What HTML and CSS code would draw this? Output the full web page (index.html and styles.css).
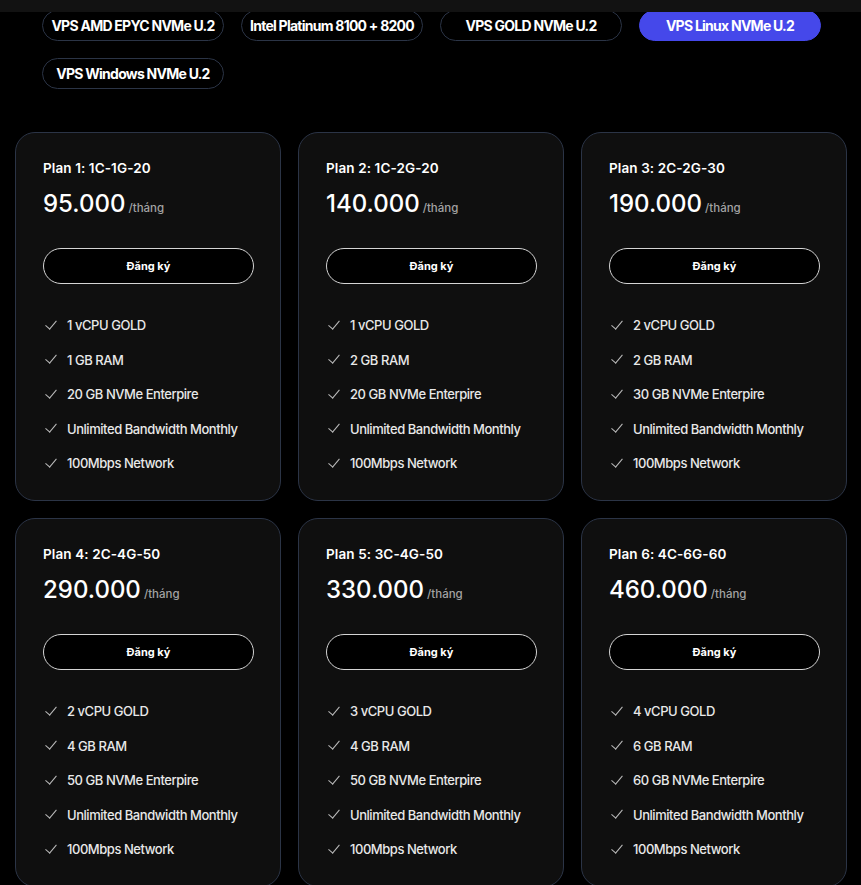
FILE: index.html
```html
<!DOCTYPE html>
<html lang="vi">
<head>
    <meta charset="UTF-8">
    <meta name="viewport" content="width=device-width, initial-scale=1.0">
    <title>Bảng giá VPS</title>
    <link rel="stylesheet" href="styles.css">
</head>
<body>
    <div class="topbar"></div>

    <div class="tabs">
        <button class="tab">VPS AMD EPYC NVMe U.2</button>
        <button class="tab">Intel Platinum 8100 + 8200</button>
        <button class="tab">VPS GOLD NVMe U.2</button>
        <button class="tab active">VPS Linux NVMe U.2</button>
        <button class="tab">VPS Windows NVMe U.2</button>
    </div>

    <div class="plans">
        <div class="plan">
            <h3>Plan 1: 1C-1G-20</h3>
            <div class="price">95.000<span>/tháng</span></div>
            <a href="#" class="order">Đăng ký</a>
            <ul class="features">
                <li>1 vCPU GOLD</li>
                <li>1 GB RAM</li>
                <li>20 GB NVMe Enterpire</li>
                <li>Unlimited Bandwidth Monthly</li>
                <li>100Mbps Network</li>
            </ul>
        </div>
        <div class="plan">
            <h3>Plan 2: 1C-2G-20</h3>
            <div class="price">140.000<span>/tháng</span></div>
            <a href="#" class="order">Đăng ký</a>
            <ul class="features">
                <li>1 vCPU GOLD</li>
                <li>2 GB RAM</li>
                <li>20 GB NVMe Enterpire</li>
                <li>Unlimited Bandwidth Monthly</li>
                <li>100Mbps Network</li>
            </ul>
        </div>
        <div class="plan">
            <h3>Plan 3: 2C-2G-30</h3>
            <div class="price">190.000<span>/tháng</span></div>
            <a href="#" class="order">Đăng ký</a>
            <ul class="features">
                <li>2 vCPU GOLD</li>
                <li>2 GB RAM</li>
                <li>30 GB NVMe Enterpire</li>
                <li>Unlimited Bandwidth Monthly</li>
                <li>100Mbps Network</li>
            </ul>
        </div>
        <div class="plan">
            <h3>Plan 4: 2C-4G-50</h3>
            <div class="price">290.000<span>/tháng</span></div>
            <a href="#" class="order">Đăng ký</a>
            <ul class="features">
                <li>2 vCPU GOLD</li>
                <li>4 GB RAM</li>
                <li>50 GB NVMe Enterpire</li>
                <li>Unlimited Bandwidth Monthly</li>
                <li>100Mbps Network</li>
            </ul>
        </div>
        <div class="plan">
            <h3>Plan 5: 3C-4G-50</h3>
            <div class="price">330.000<span>/tháng</span></div>
            <a href="#" class="order">Đăng ký</a>
            <ul class="features">
                <li>3 vCPU GOLD</li>
                <li>4 GB RAM</li>
                <li>50 GB NVMe Enterpire</li>
                <li>Unlimited Bandwidth Monthly</li>
                <li>100Mbps Network</li>
            </ul>
        </div>
        <div class="plan">
            <h3>Plan 6: 4C-6G-60</h3>
            <div class="price">460.000<span>/tháng</span></div>
            <a href="#" class="order">Đăng ký</a>
            <ul class="features">
                <li>4 vCPU GOLD</li>
                <li>6 GB RAM</li>
                <li>60 GB NVMe Enterpire</li>
                <li>Unlimited Bandwidth Monthly</li>
                <li>100Mbps Network</li>
            </ul>
        </div>
    </div>
</body>
</html>
```

FILE: styles.css
```css
body {
    margin: 0;
    background: #000;
    color: #fff;
    font-family: 'Inter', 'Noto Sans', sans-serif;
}
.topbar {
    position: fixed;
    top: 0;
    left: 0;
    right: 0;
    height: 12px;
    background: #121212;
    z-index: 10;
}
.tabs {
    display: grid;
    grid-template-columns: repeat(4, 182px);
    gap: 17px;
    margin: 10px 0 0 42px;
}
.tab {
    height: 31px;
    border: 1px solid #2b3446;
    border-radius: 16px;
    background: #000;
    color: #fff;
    font-family: inherit;
    font-size: 14px;
    font-weight: 700;
    letter-spacing: -0.75px;
    padding: 0;
    cursor: pointer;
}
.tab.active {
    background: #4548ea;
    border-color: #4548ea;
}
.plans {
    display: grid;
    grid-template-columns: repeat(3, 266px);
    gap: 17px;
    margin: 43px 0 0 15px;
}
.plan {
    background: #0f0f0f;
    border: 1px solid #2b3446;
    border-radius: 20px;
    padding: 27px 26px 27px 27px;
}
.plan h3 {
    margin: 0;
    font-size: 13.5px;
    font-weight: 600;
    line-height: 16px;
    letter-spacing: 0.1px;
}
.price {
    margin-top: 13px;
    font-size: 24px;
    font-weight: 500;
    line-height: 30px;
}
.price span {
    margin-left: 3px;
    font-size: 11.5px;
    color: #a3a3a3;
    font-weight: 500;
}
.order {
    display: block;
    margin-top: 25px;
    height: 34px;
    line-height: 34px;
    border: 1px solid #d4d4d4;
    border-radius: 18px;
    background: #000;
    color: #fff;
    text-align: center;
    font-size: 11px;
    font-weight: 700;
    text-decoration: none;
}
.features {
    list-style: none;
    margin: 31px 0 0;
    padding: 0;
    display: flex;
    flex-direction: column;
    gap: 14.5px;
}
.features li {
    display: flex;
    align-items: center;
    line-height: 20px;
    font-size: 13px;
    font-weight: 500;
    color: #e8e8e8;
    letter-spacing: -0.45px;
}
.features li::before {
    content: "";
    width: 5px;
    height: 10px;
    border: solid #bdbdbd;
    border-width: 0 1.5px 1.5px 0;
    transform: rotate(40deg);
    margin: 0 13px 4px 5px;
    flex: none;
}
```
